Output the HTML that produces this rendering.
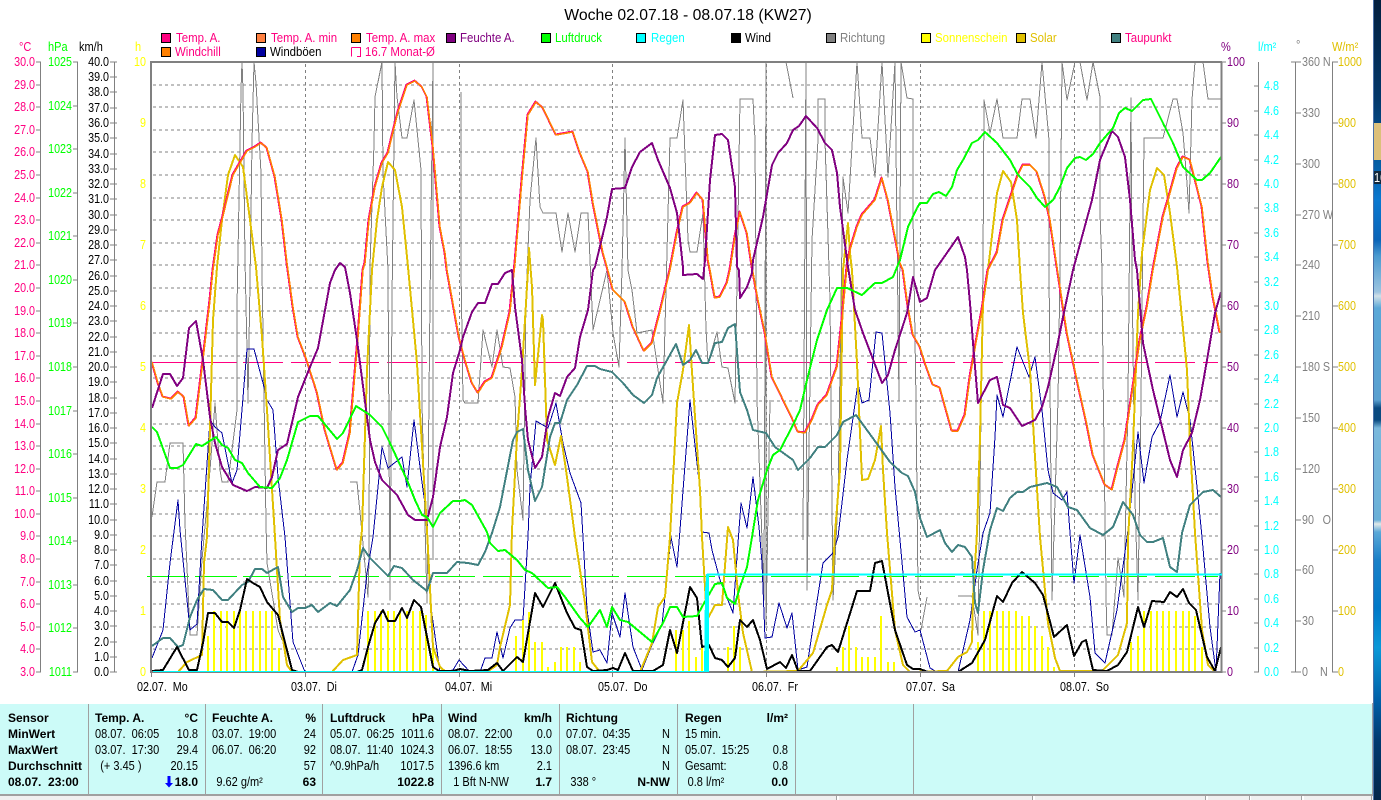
<!DOCTYPE html>
<html lang="de">
<head>
<meta charset="utf-8">
<title>Woche 02.07.18 - 08.07.18 (KW27)</title>
<style>
html,body{margin:0;padding:0;background:#fff;width:1381px;height:800px;overflow:hidden}
svg{display:block;font-family:"Liberation Sans",Arial,sans-serif;font-size:12.5px}
text{white-space:pre}
.c{shape-rendering:crispEdges;fill:none}
.b{font-weight:bold;font-size:12px}
.e{text-anchor:end}
.l{font-size:13px}
</style>
</head>
<body>
<svg width="1381" height="800" viewBox="0 0 1381 800" xmlns="http://www.w3.org/2000/svg">
<defs>
<linearGradient id="d" x1="0" y1="0" x2="0" y2="1">
<stop offset="0" stop-color="#021f3f"/><stop offset=".125" stop-color="#03386b"/><stop offset=".21" stop-color="#0560a8"/>
<stop offset=".25" stop-color="#0a78d0"/><stop offset=".30" stop-color="#0a64b8"/><stop offset=".32" stop-color="#4a9ad0"/>
<stop offset=".365" stop-color="#9cc4e0"/><stop offset=".37" stop-color="#d0e0e8"/><stop offset=".385" stop-color="#5aa8d8"/>
<stop offset=".50" stop-color="#5aa0d0"/><stop offset=".51" stop-color="#0a4a80"/><stop offset=".525" stop-color="#0a4a80"/>
<stop offset=".535" stop-color="#7ab8dc"/><stop offset=".65" stop-color="#6ab0d8"/><stop offset=".655" stop-color="#e0e8e8"/>
<stop offset=".665" stop-color="#5aa8d8"/><stop offset=".70" stop-color="#1a80c8"/><stop offset=".76" stop-color="#0078c8"/>
<stop offset=".81" stop-color="#0a98d8"/><stop offset=".875" stop-color="#0060a8"/><stop offset=".925" stop-color="#003a70"/>
<stop offset="1" stop-color="#02264a"/>
</linearGradient>
<clipPath id="p"><rect x="151" y="62" width="1071" height="612"/></clipPath>
<polyline id="ta" points="152,362 158,383 163,397 171,399 178,392 184,397 189,426 196,418 203,360 210,300 213,270 218,235 222,220 233,175 247,151 255,147 261,143 267,148 275,177 282,220 287,263 293,307 298,337 306,358 317,392 325,430 337,470 343,463 350,433 355,373 358,337 363,270 365,263 369,220 375,187 382,163 388,153 393,132 398,112 407,85 415,81 422,87 427,97 433,147 440,227 445,253 447,270 459,337 465,360 472,383 478,393 485,382 492,378 502,347 510,312 515,263 522,180 528,115 536,102 543,108 556,135 573,132 580,153 588,172 593,203 603,253 607,267 613,290 625,302 633,327 644,351 652,343 660,312 670,270 677,233 683,207 690,203 697,193 703,200 708,260 710,270 715,298 720,297 727,283 730,270 735,237 740,212 747,233 752,267 758,300 765,333 772,377 793,420 798,432 805,433 812,420 818,405 827,395 837,367 842,320 847,267 850,250 857,227 862,215 875,200 882,178 888,200 900,263 903,270 908,307 913,335 920,347 925,363 933,385 940,388 947,413 952,431 958,431 965,415 970,377 977,337 982,310 988,270 997,253 1003,220 1012,193 1018,175 1023,165 1030,165 1037,172 1045,197 1050,220 1057,267 1067,333 1077,380 1087,425 1093,455 1105,485 1112,490 1117,470 1125,440 1133,387 1140,340 1147,307 1153,270 1163,217 1170,193 1177,168 1183,157 1190,160 1197,187 1202,207 1208,263 1213,297 1220,333"/>
</defs>

<!-- desktop strip -->
<rect x="1373" y="0" width="8" height="800" fill="url(#d)"/>
<rect x="1373" y="0" width="1" height="800" fill="#4a70a8"/>
<rect x="1374" y="123" width="7" height="37" fill="#dcc07a"/>
<rect x="1374" y="171" width="7" height="13" fill="#12283c"/>
<text transform="translate(1374 182) scale(.88 1)" fill="#fff">10</text>

<!-- title -->
<text x="688" y="20" text-anchor="middle" font-size="15.75" fill="#000">Woche 02.07.18 - 08.07.18 (KW27)</text>

<!-- legend swatches -->
<g class="c" stroke="#000" stroke-width="1" shape-rendering="crispEdges">
<rect x="161.5" y="33.5" width="9" height="9" fill="#ff0080"/>
<rect x="161.5" y="47.5" width="9" height="9" fill="#ff8000"/>
<rect x="256.5" y="33.5" width="9" height="9" fill="#ff8040"/>
<rect x="256.5" y="47.5" width="9" height="9" fill="#0000a0"/>
<rect x="351.5" y="33.5" width="9" height="9" fill="#ff8000"/>
<rect x="446.5" y="33.5" width="9" height="9" fill="#800080"/>
<rect x="541.5" y="33.5" width="9" height="9" fill="#00ff00"/>
<rect x="636.5" y="33.5" width="9" height="9" fill="#00ffff"/>
<rect x="731.5" y="33.5" width="9" height="9" fill="#000"/>
<rect x="826.5" y="33.5" width="9" height="9" fill="#808080"/>
<rect x="921.5" y="33.5" width="9" height="9" fill="#ffff00"/>
<rect x="1016.5" y="33.5" width="9" height="9" fill="#e0c000"/>
<rect x="1111.5" y="33.5" width="9" height="9" fill="#408080"/>
</g>
<path class="c" stroke="#ff0080" d="M351.5 47.5H360.5V56.5H357M351.5 47.5V56.5"/>
<g class="l">
<text transform="translate(176 42) scale(.88 1)" fill="#ff0080">Temp. A.</text>
<text transform="translate(175 56) scale(.88 1)" fill="#ff0080">Windchill</text>
<text transform="translate(271 42) scale(.88 1)" fill="#ff0080">Temp. A. min</text>
<text transform="translate(270 56) scale(.88 1)" fill="#000">Windböen</text>
<text transform="translate(366 42) scale(.88 1)" fill="#ff0080">Temp. A. max</text>
<text transform="translate(365 56) scale(.88 1)" fill="#ff0080">16.7 Monat-Ø</text>
<text transform="translate(460 42) scale(.88 1)" fill="#800080">Feuchte A.</text>
<text transform="translate(555 42) scale(.88 1)" fill="#00ff00">Luftdruck</text>
<text transform="translate(651 42) scale(.88 1)" fill="#00ffff">Regen</text>
<text transform="translate(745 42) scale(.88 1)" fill="#000">Wind</text>
<text transform="translate(840 42) scale(.88 1)" fill="#808080">Richtung</text>
<text transform="translate(935 42) scale(.88 1)" fill="#ffff00">Sonnenschein</text>
<text transform="translate(1030 42) scale(.88 1)" fill="#e0c000">Solar</text>
<text transform="translate(1125 42) scale(.88 1)" fill="#ff0080">Taupunkt</text>
</g>

<!-- unit labels -->
<text transform="translate(19 51) scale(.88 1)" fill="#ff0080">°C</text>
<text transform="translate(48 51) scale(.88 1)" fill="#00ff00">hPa</text>
<text transform="translate(79 51) scale(.88 1)" fill="#000">km/h</text>
<text transform="translate(135 51) scale(.88 1)" fill="#ffff00">h</text>
<text transform="translate(1221 51) scale(.88 1)" fill="#800080">%</text>
<text transform="translate(1258 51) scale(.88 1)" fill="#00ffff">l/m²</text>
<text transform="translate(1296 49) scale(.88 1)" fill="#808080">°</text>
<text transform="translate(1332 51) scale(.88 1)" fill="#e0c000">W/m²</text>

<!-- left axes -->
<path class="c" stroke="#808080" d="M40.5 62V672M77.5 62V672M114.5 62V672
M36 62H41M36 85H41M36 107H41M36 130H41M36 152H41M36 175H41M36 198H41M36 220H41M36 243H41M36 265H41M36 288H41M36 311H41M36 333H41M36 356H41M36 378H41M36 401H41M36 424H41M36 446H41M36 469H41M36 491H41M36 514H41M36 536H41M36 559H41M36 582H41M36 604H41M36 627H41M36 649H41M36 672H41
M73 62H78M73 106H78M73 149H78M73 193H78M73 236H78M73 280H78M73 323H78M73 367H78M73 411H78M73 454H78M73 498H78M73 541H78M73 585H78M73 628H78M73 672H78
M110 62H117M110 77H117M110 92H117M110 108H117M110 123H117M110 138H117M110 154H117M110 169H117M110 184H117M110 199H117M110 215H117M110 230H117M110 245H117M110 260H117M110 276H117M110 291H117M110 306H117M110 321H117M110 337H117M110 352H117M110 367H117M110 382H117M110 398H117M110 413H117M110 428H117M110 443H117M110 459H117M110 474H117M110 489H117M110 504H117M110 520H117M110 535H117M110 550H117M110 565H117M110 581H117M110 596H117M110 611H117M110 626H117M110 642H117M110 657H117M110 672H117"/>

<g class="e" fill="#ff0080" transform="translate(35 0) scale(.86 1)">
<text y="66">30.0</text><text y="89">29.0</text><text y="111">28.0</text><text y="134">27.0</text><text y="156">26.0</text><text y="179">25.0</text><text y="202">24.0</text><text y="224">23.0</text><text y="247">22.0</text><text y="269">21.0</text><text y="292">20.0</text><text y="315">19.0</text><text y="337">18.0</text><text y="360">17.0</text><text y="382">16.0</text><text y="405">15.0</text><text y="428">14.0</text><text y="450">13.0</text><text y="473">12.0</text><text y="495">11.0</text><text y="518">10.0</text><text y="540">9.0</text><text y="563">8.0</text><text y="586">7.0</text><text y="608">6.0</text><text y="631">5.0</text><text y="653">4.0</text><text y="676">3.0</text>
</g>
<g class="e" fill="#00ff00" transform="translate(72 0) scale(.86 1)">
<text y="66">1025</text><text y="110">1024</text><text y="153">1023</text><text y="197">1022</text><text y="240">1021</text><text y="284">1020</text><text y="327">1019</text><text y="371">1018</text><text y="415">1017</text><text y="458">1016</text><text y="502">1015</text><text y="545">1014</text><text y="589">1013</text><text y="632">1012</text><text y="676">1011</text>
</g>
<g class="e" fill="#000" transform="translate(109 0) scale(.86 1)">
<text y="66">40.0</text><text y="81">39.0</text><text y="96">38.0</text><text y="112">37.0</text><text y="127">36.0</text><text y="142">35.0</text><text y="158">34.0</text><text y="173">33.0</text><text y="188">32.0</text><text y="203">31.0</text><text y="219">30.0</text><text y="234">29.0</text><text y="249">28.0</text><text y="264">27.0</text><text y="280">26.0</text><text y="295">25.0</text><text y="310">24.0</text><text y="325">23.0</text><text y="341">22.0</text><text y="356">21.0</text><text y="371">20.0</text><text y="386">19.0</text><text y="402">18.0</text><text y="417">17.0</text><text y="432">16.0</text><text y="447">15.0</text><text y="463">14.0</text><text y="478">13.0</text><text y="493">12.0</text><text y="508">11.0</text><text y="524">10.0</text><text y="539">9.0</text><text y="554">8.0</text><text y="569">7.0</text><text y="585">6.0</text><text y="600">5.0</text><text y="615">4.0</text><text y="630">3.0</text><text y="646">2.0</text><text y="661">1.0</text><text y="676">0.0</text>
</g>
<g class="e" fill="#ffff00" transform="translate(146 0) scale(.86 1)">
<text y="66">10</text><text y="127">9</text><text y="188">8</text><text y="249">7</text><text y="310">6</text><text y="371">5</text><text y="432">4</text><text y="493">3</text><text y="554">2</text><text y="615">1</text><text y="676">0</text>
</g>

<!-- grid -->
<path class="c" stroke="#808080" stroke-dasharray="3 3" d="M153 85H1221M153 107H1221M153 130H1221M153 152H1221M153 175H1221M153 198H1221M153 220H1221M153 243H1221M153 265H1221M153 288H1221M153 311H1221M153 333H1221M153 356H1221M153 378H1221M153 401H1221M153 424H1221M153 446H1221M153 469H1221M153 491H1221M153 514H1221M153 536H1221M153 559H1221M153 582H1221M153 604H1221M153 627H1221M153 649H1221
M305.5 64V672M459.5 64V672M612.5 64V672M766.5 64V672M920.5 64V672M1074.5 64V672"/>
<path class="c" stroke="#808080" d="M151.5 672V677M305.5 672V677M459.5 672V677M612.5 672V677M766.5 672V677M920.5 672V677M1074.5 672V677"/>

<!-- reference lines -->
<path class="c" stroke="#ff0080" d="M152 362.5H237M243 362.5H283M291 362.5H331M339 362.5H379M387 362.5H427M435 362.5H475M483 362.5H523M531 362.5H571M579 362.5H619M627 362.5H667M675 362.5H715M723 362.5H763M771 362.5H811M819 362.5H859M867 362.5H907M915 362.5H955M963 362.5H1003M1011 362.5H1051M1059 362.5H1099M1107 362.5H1147M1155 362.5H1195M1203 362.5H1218"/>
<path class="c" stroke="#00ff00" d="M147 576.5H189M195 576.5H237M243 576.5H283M291 576.5H331M339 576.5H379M387 576.5H427M435 576.5H475M483 576.5H523M531 576.5H571M579 576.5H619M627 576.5H667M675 576.5H715M723 576.5H763M771 576.5H811M819 576.5H859M867 576.5H907M915 576.5H955M963 576.5H1003M1011 576.5H1051M1059 576.5H1099M1107 576.5H1147M1155 576.5H1195M1203 576.5H1218"/>

<g clip-path="url(#p)" fill="none" stroke-linejoin="round" class="c">
<!-- Richtung -->
<path class="c" stroke="#808080" d="M152 517L157 482L165 482L170 443L183 443L185 523L190 635L197 635L202 560L210 470L215 403L220 470L222 482L228 482L237 410L237 307L238 253L241 90L242 62L243 90L245 260L247 350L248 403L250 282L252 143L254 62L256 83L261 173L262 270L266 523L267 563L278 630L282 640
M350 482L357 482L362 533L368 597L369 560L370 267L374 143L375 97L382 62L383 173L388 270L390 600L392 300L395 62L397 97L402 138L407 138L414 100L421 170L422 403L427 603L428 493L430 300L433 62L433 560
M461 92L461 270L463 400L465 403L478 403L483 330L492 367L497 330L503 367L510 368L515 397L517 470L523 520L526 300L530 200L536 138L540 207L543 213L556 213L562 252L568 213L575 252L581 213L588 213L593 330L607 270L613 333L619 367L622 270L625 138L628 270L632 290L637 333L652 330L663 403L670 138L677 138L683 100L688 240L690 252L697 252L703 213L706 330L708 363L717 332L722 367L728 368L735 403L740 99L753 99L755 140L757 400L762 540L764 600L766 62L766 625L770 400
M786 62L793 98
M803 540L806 62L807 590L812 240L818 140L818 99L825 99L825 140L830 300L833 600L838 500L843 177L848 213L857 62L862 138L870 138L875 177L882 62L888 177L895 62L899 400L901 62L907 98L913 99L913 213L916 400L918 590L920 600
M921 630L927 597
M958 596L972 596L978 635L983 267L984 100L990 133L997 99L1003 138L1017 138L1022 99L1030 99L1036 138L1042 62L1049 140L1049 270L1052 600L1058 400L1060 270L1062 62L1067 100L1075 62L1080 62L1087 100L1093 62L1100 97L1100 213L1102 270L1103 370L1105 520L1106 597L1107 635L1112 635L1118 558L1124 597L1128 400L1131 98L1132 270L1135 500L1138 600L1141 400L1144 138L1163 138L1173 99L1177 99L1183 133L1187 183L1189 213L1192 100L1195 62L1203 62L1208 99L1221 99"/>

<!-- Windböen -->
<polyline stroke="#0000a0" points="152,658 163,630 170,563 178,500 180,530 190,630 197,624 202,537 210,420 215,427 222,433 232,483 237,470 247,349 254,349 263,383 267,400 273,410 278,477 285,537 293,642 305,672 352,672 358,655 367,573 373,537 382,447 388,468 402,457 407,487 414,420 423,490 427,517 430,600 440,672 453,670 459,660 470,672 480,672 485,658 492,658 497,632 503,658 510,628 515,620 523,620 528,537 530,487 536,421 548,428 556,403 563,443 570,473 581,503 583,537 587,610 593,652 600,650 607,663 612,613 620,637 625,593 633,647 642,670 652,645 662,625 671,537 677,567 680,530 690,400 700,490 702,532 709,533 712,550 720,580 733,613 738,543 741,503 747,528 753,477 759,527 762,563 765,638 772,637 779,603 787,628 792,613 798,670 807,667 813,627 823,563 833,553 838,537 847,460 858,383 862,403 869,400 876,332 882,333 890,413 895,487 900,540 907,617 915,632 920,630 930,668 937,672 958,672 970,620 977,570 983,533 990,513 995,437 997,395 1003,417 1017,347 1029,377 1035,357 1042,410 1048,470 1053,493 1062,500 1067,492 1070,533 1074,583 1080,535 1090,597 1095,653 1105,663 1117,610 1128,530 1138,432 1144,483 1152,437 1160,422 1170,375 1177,417 1183,392 1190,420 1197,487 1202,537 1210,627 1216,672 1220,573"/>

<!-- Sonnenschein -->
<path stroke="#ffff00" stroke-width="2" class="c" d="M208 636V672M214 611V672M221 611V672M227 611V672M234 611V672M240 611V672M246 611V672M253 611V672M260 611V672M266 611V672M272 611V672M279 648V672
M368 611V672M375 611V672M381 611V672M388 611V672M394 611V672M400 611V672M407 611V672M413 611V672M420 611V672M426 615V672M433 647V672
M516 636V672M523 620V672M529 612V672M535 642V672M542 642V672M548 667V672M555 662V672M561 647V672M567 647V672M574 647V672M580 662V672
M676 630V672M683 630V672M689 621V672M696 657V672M702 646V672M728 647V672M734 626V672M740 647V672
M837 667V672M843 647V672M849 626V672M856 647V672M862 657V672M868 657V672M875 657V672M881 616V672M888 662V672M894 662V672
M978 642V672M984 611V672M990 611V672M997 611V672M1003 611V672M1009 611V672M1016 611V672M1022 616V672M1029 616V672M1035 626V672M1042 636V672M1048 647V672M1054 667V672
M1131 642V672M1138 636V672M1144 611V672M1151 611V672M1157 611V672M1163 611V672M1169 611V672M1176 611V672M1183 611V672M1189 611V672M1195 616V672M1202 647V672"/>

<!-- Solar -->
<polyline stroke="#e0c000" stroke-width="2" points="178,672 187,662 202,655 204,563 207,537 213,320 217,267 222,220 228,175 235,155 243,167 250,220 256,267 262,337 267,410 275,537 280,620 287,665 292,672 332,672 343,660 357,655 360,547 362,530 367,370 372,270 377,220 382,187 388,162 395,170 402,207 408,267 417,363 423,463 427,530 433,647 440,667 446,672 487,672 497,665 500,647 510,605 512,530 517,437 522,370 528,270 529,248 532,287 535,385 537,365 542,315 543,320 547,440 555,465 561,436 567,477 575,537 585,603 592,662 600,672 640,672 652,643 658,607 665,597 670,537 677,403 683,370 689,325 693,387 700,490 702,537 707,620 715,605 722,605 728,527 733,540 738,593 743,633 752,672 798,671 813,653 827,605 832,590 835,533 840,470 843,270 848,223 850,253 852,270 857,363 862,480 868,479 875,460 881,426 883,470 887,533 895,630 903,665 910,672 947,671 958,657 967,652 972,642 973,597 977,533 980,437 983,303 988,270 997,193 1003,171 1011,182 1017,220 1020,270 1023,313 1030,370 1035,457 1040,537 1048,623 1055,658 1060,671 1102,671 1118,655 1127,623 1128,540 1133,447 1138,313 1142,253 1150,190 1157,168 1164,175 1170,213 1177,267 1187,370 1190,443 1195,533 1202,630 1208,665 1215,672 1221,672"/>

<!-- Taupunkt -->
<polyline stroke="#408080" stroke-width="2" points="152,646 163,638 170,638 178,647 183,645 190,617 197,600 204,589 213,590 222,600 228,600 242,585 248,582 255,569 262,569 267,573 278,567 283,597 292,612 298,608 305,608 312,605 318,612 330,603 337,606 350,590 357,570 363,548 370,558 388,576 394,566 402,568 413,580 427,591 433,573 447,573 457,562 468,563 478,565 485,552 492,533 500,507 513,440 517,432 523,429 528,470 535,501 542,487 550,437 555,423 560,423 567,400 577,385 587,366 595,366 600,369 612,372 623,383 633,395 644,403 652,395 657,378 676,344 683,365 690,360 696,350 702,363 708,363 715,343 722,342 728,328 735,324 740,392 747,410 753,430 766,433 775,447 793,460 798,470 810,458 818,447 825,447 837,435 843,422 856,415 880,448 890,462 902,473 908,476 915,492 920,518 927,537 940,530 945,543 952,552 958,545 965,547 972,557 973,573 975,603 978,613 983,570 990,530 997,508 1003,511 1010,498 1017,492 1023,492 1030,487 1047,483 1057,487 1068,507 1077,510 1090,528 1103,535 1113,527 1123,502 1133,515 1140,535 1147,542 1153,542 1163,538 1170,567 1177,572 1182,533 1190,505 1203,492 1213,490 1221,497"/>

<!-- Temperatur -->
<use href="#ta" transform="translate(-.5 -.5)" stroke="#ff0080" stroke-width="2"/>
<use href="#ta" stroke="#ff8000" stroke-width="1.5"/>

<!-- Feuchte -->
<polyline stroke="#800080" stroke-width="2" points="152,408 163,374 170,374 177,386 183,378 189,328 196,321 203,360 210,417 215,443 222,467 233,485 247,491 255,487 267,488 272,477 278,450 287,444 298,397 310,367 318,348 330,283 335,270 340,263 345,267 350,293 357,340 370,440 375,462 382,480 397,495 408,515 415,520 427,520 433,497 440,447 447,417 453,373 460,350 463,337 472,312 478,303 485,303 492,284 498,284 505,273 512,270 515,307 522,360 525,407 528,440 535,468 542,457 548,417 555,393 560,396 567,377 575,368 580,337 588,310 593,270 595,267 607,217 612,189 625,188 632,167 640,152 652,143 658,160 670,188 677,213 683,267 683,275 697,274 703,279 705,260 710,180 715,135 722,134 728,140 735,187 737,267 739,270 740,298 747,287 752,273 753,260 763,217 772,165 778,153 787,143 793,130 799,126 806,116 817,128 825,143 832,150 837,173 840,207 848,267 855,310 863,333 882,383 888,375 895,350 907,313 913,277 920,302 927,298 935,270 958,237 965,257 967,270 970,303 973,343 978,403 990,380 997,377 1003,405 1010,408 1022,426 1035,420 1042,407 1048,387 1057,347 1063,317 1073,270 1083,233 1092,200 1100,160 1112,131 1118,137 1125,157 1130,200 1135,260 1137,270 1143,343 1153,390 1170,460 1177,477 1183,450 1192,433 1200,400 1207,360 1215,313 1221,292"/>

<!-- Wind -->
<polyline stroke="#000" stroke-width="2" points="152,671 163,670 177,647 189,670 197,670 203,643 208,613 215,613 222,622 228,622 234,628 240,610 247,579 253,583 260,587 267,602 278,615 292,670 298,672 357,672 362,670 368,647 375,623 383,610 388,621 395,621 402,608 407,618 414,600 421,607 433,667 439,671 453,671 460,669 470,671 488,670 497,663 503,671 517,657 523,662 535,593 543,607 555,583 567,613 575,628 581,630 587,667 593,671 607,670 613,668 618,670 625,653 633,671 653,671 663,665 670,630 677,653 690,587 697,598 702,647 709,645 715,658 722,660 728,667 735,658 740,620 747,627 753,620 760,640 767,669 780,662 786,668 792,655 798,671 810,671 827,647 832,645 838,652 857,591 870,591 875,563 882,561 895,630 907,665 913,669 920,669 928,672 958,672 972,663 985,640 997,596 1003,602 1012,583 1022,572 1035,583 1043,595 1054,637 1067,625 1074,656 1082,642 1086,640 1093,670 1107,671 1118,665 1127,652 1138,607 1144,627 1152,601 1164,602 1170,592 1177,597 1183,589 1189,603 1196,610 1207,657 1215,671 1221,647"/>

<!-- Luftdruck -->
<polyline stroke="#00ff00" stroke-width="2" points="152,427 157,432 170,468 177,468 183,465 196,444 202,446 216,437 222,445 228,448 235,460 242,463 248,473 260,487 272,488 280,478 287,460 298,422 310,416 318,416 337,439 343,433 356,406 370,415 382,427 390,443 407,480 415,500 422,515 427,517 433,527 440,513 453,501 460,501 465,500 472,505 487,532 490,543 498,551 505,550 517,560 525,570 532,573 548,588 557,587 565,597 580,618 588,627 600,610 607,627 612,607 620,620 628,622 652,642 663,623 670,607 677,607 683,617 697,616 703,605 715,584 722,583 727,598 735,604 740,587 747,567 752,537 758,500 767,470 773,455 780,450 793,425 800,410 807,380 817,340 827,310 837,288 847,288 862,295 875,283 882,283 893,277 900,260 908,227 917,208 920,203 927,203 933,194 939,192 946,196 952,187 957,170 963,160 972,143 978,140 985,132 997,143 1010,160 1018,175 1030,187 1037,198 1045,207 1053,200 1060,187 1067,168 1075,158 1080,157 1086,160 1093,154 1100,143 1113,128 1119,113 1125,108 1132,111 1143,100 1151,99 1163,123 1173,143 1183,167 1197,180 1202,180 1210,173 1221,157"/>
</g>

<!-- plot border -->
<path class="c" stroke="#808080" stroke-width="2" d="M150 62H1222M151 62V673M1221.5 62V673M151 672H1222"/>

<!-- Regen -->
<path class="c" stroke="#00ffff" stroke-width="1" d="M153 671.5H704"/>
<path class="c" stroke="#00ffff" stroke-width="2" d="M705 672L706 590L707.5 574"/>
<path class="c" stroke="#00ffff" stroke-width="3" d="M707.5 574V672"/>
<path class="c" stroke="#00ffff" stroke-width="2" d="M707 574.5H1222"/>

<!-- right axes -->
<path class="c" stroke="#808080" d="M1258.5 62V672M1295.5 62V672M1332.5 62V672
M1222 62H1226M1222 123H1226M1222 184H1226M1222 245H1226M1222 306H1226M1222 367H1226M1222 428H1226M1222 489H1226M1222 550H1226M1222 611H1226M1222 672H1226
M1254 86H1259M1254 111H1259M1254 135H1259M1254 160H1259M1254 184H1259M1254 208H1259M1254 233H1259M1254 257H1259M1254 282H1259M1254 306H1259M1254 330H1259M1254 355H1259M1254 379H1259M1254 404H1259M1254 428H1259M1254 452H1259M1254 477H1259M1254 501H1259M1254 526H1259M1254 550H1259M1254 574H1259M1254 599H1259M1254 623H1259M1254 648H1259M1254 672H1259
M1291 62H1301M1295 113H1301M1295 164H1301M1295 215H1301M1295 265H1301M1295 316H1301M1295 367H1301M1295 418H1301M1295 469H1301M1295 520H1301M1295 570H1301M1295 621H1301M1291 672H1301
M1332 62H1338M1332 123H1338M1332 184H1338M1332 245H1338M1332 306H1338M1332 367H1338M1332 428H1338M1332 489H1338M1332 550H1338M1332 611H1338M1332 672H1338"/>

<g fill="#800080" transform="translate(1227 0) scale(.86 1)">
<text y="66">100</text><text y="127">90</text><text y="188">80</text><text y="249">70</text><text y="310">60</text><text y="371">50</text><text y="432">40</text><text y="493">30</text><text y="554">20</text><text y="615">10</text><text y="676">0</text>
</g>
<g fill="#00ffff" transform="translate(1264 0) scale(.86 1)">
<text y="90">4.8</text><text y="115">4.6</text><text y="139">4.4</text><text y="164">4.2</text><text y="188">4.0</text><text y="212">3.8</text><text y="237">3.6</text><text y="261">3.4</text><text y="286">3.2</text><text y="310">3.0</text><text y="334">2.8</text><text y="359">2.6</text><text y="383">2.4</text><text y="408">2.2</text><text y="432">2.0</text><text y="456">1.8</text><text y="481">1.6</text><text y="505">1.4</text><text y="530">1.2</text><text y="554">1.0</text><text y="578">0.8</text><text y="603">0.6</text><text y="627">0.4</text><text y="652">0.2</text><text y="676">0.0</text>
</g>
<g fill="#808080" transform="translate(1302 0) scale(.86 1)">
<text y="66">360 N</text><text y="117">330</text><text y="168">300</text><text y="219">270 W</text><text y="269">240</text><text y="320">210</text><text y="371">180 S</text><text y="422">150</text><text y="473">120</text><text y="524">90</text><text x="24" y="524">O</text><text y="574">60</text><text y="625">30</text><text y="676">0</text><text x="21" y="676">N</text>
</g>
<g fill="#e0c000" transform="translate(1338 0) scale(.86 1)">
<text y="66">1000</text><text y="127">900</text><text y="188">800</text><text y="249">700</text><text y="310">600</text><text y="371">500</text><text y="432">400</text><text y="493">300</text><text y="554">200</text><text y="615">100</text><text y="676">0</text>
</g>

<!-- date labels -->
<g fill="#000">
<text transform="translate(137 691) scale(.86 1)">02.07.  Mo</text><text transform="translate(291 691) scale(.86 1)">03.07.  Di</text><text transform="translate(445 691) scale(.86 1)">04.07.  Mi</text><text transform="translate(598 691) scale(.86 1)">05.07.  Do</text><text transform="translate(752 691) scale(.86 1)">06.07.  Fr</text><text transform="translate(906 691) scale(.86 1)">07.07.  Sa</text><text transform="translate(1060 691) scale(.86 1)">08.07.  So</text>
</g>

<!-- info panel -->
<rect x="0" y="704" width="1372" height="90" fill="#ccfbf8"/>
<path class="c" stroke="#a0a0a0" stroke-width="1" d="M88.5 704V794M205.5 704V794M322.5 704V794M441.5 704V794M559.5 704V794M677.5 704V794M795.5 704V794M913.5 704V794"/>
<rect x="1372" y="703" width="1" height="92" fill="#a0a0a0"/>
<rect x="0" y="794" width="1373" height="2" fill="#a0a0a0"/>
<rect x="0" y="796" width="1373" height="4" fill="#f0f0f0"/>
<path class="c" stroke="#fff" stroke-width="2" d="M838 796V800M1034 796V800M1207 796V800M1250 796V800M1303 796V800"/>
<path class="c" stroke="#a0a0a0" d="M836.5 796V800M1032.5 796V800M1205.5 796V800M1249.5 796V800M1301.5 796V800M1371.5 796V800"/>

<g fill="#000">
<text class="b" x="8" y="722">Sensor</text>
<text class="b" x="8" y="738">MinWert</text>
<text class="b" x="8" y="754">MaxWert</text>
<text class="b" x="8" y="770">Durchschnitt</text>
<text class="b" x="8" y="786">08.07.  23:00</text>

<text class="b" x="95" y="722">Temp. A.</text><text class="b e" x="198" y="722">°C</text>
<g transform="translate(95 0) scale(.88 1)"><text y="738">08.07.  06:05</text><text y="754">03.07.  17:30</text><text x="6" y="770">(+ 3.45 )</text></g>
<g class="e" transform="translate(198 0) scale(.88 1)"><text y="738">10.8</text><text y="754">29.4</text><text y="770">20.15</text></g>
<text class="b e" x="198" y="786">18.0</text>

<text class="b" x="212" y="722">Feuchte A.</text><text class="b e" x="316" y="722">%</text>
<g transform="translate(212 0) scale(.88 1)"><text y="738">03.07.  19:00</text><text y="754">06.07.  06:20</text><text x="5" y="786">9.62 g/m²</text></g>
<g class="e" transform="translate(316 0) scale(.88 1)"><text y="738">24</text><text y="754">92</text><text y="770">57</text></g>
<text class="b e" x="316" y="786">63</text>

<text class="b" x="330" y="722">Luftdruck</text><text class="b e" x="434" y="722">hPa</text>
<g transform="translate(330 0) scale(.88 1)"><text y="738">05.07.  06:25</text><text y="754">08.07.  11:40</text><text y="770">^0.9hPa/h</text></g>
<g class="e" transform="translate(434 0) scale(.88 1)"><text y="738">1011.6</text><text y="754">1024.3</text><text y="770">1017.5</text></g>
<text class="b e" x="434" y="786">1022.8</text>

<text class="b" x="448" y="722">Wind</text><text class="b e" x="552" y="722">km/h</text>
<g transform="translate(448 0) scale(.88 1)"><text y="738">08.07.  22:00</text><text y="754">06.07.  18:55</text><text y="770">1396.6 km</text><text x="6" y="786">1 Bft N-NW</text></g>
<g class="e" transform="translate(552 0) scale(.88 1)"><text y="738">0.0</text><text y="754">13.0</text><text y="770">2.1</text></g>
<text class="b e" x="552" y="786">1.7</text>

<text class="b" x="566" y="722">Richtung</text>
<g transform="translate(566 0) scale(.88 1)"><text y="738">07.07.  04:35</text><text y="754">08.07.  23:45</text><text x="5" y="786">338 °</text></g>
<g class="e" transform="translate(670 0) scale(.88 1)"><text y="738">N</text><text y="754">N</text><text y="770">N</text></g>
<text class="b e" x="670" y="786">N-NW</text>

<text class="b" x="685" y="722">Regen</text><text class="b e" x="788" y="722">l/m²</text>
<g transform="translate(685 0) scale(.88 1)"><text y="738">15 min.</text><text y="754">05.07.  15:25</text><text y="770">Gesamt:</text><text x="3" y="786">0.8 l/m²</text></g>
<g class="e" transform="translate(788 0) scale(.88 1)"><text y="754">0.8</text><text y="770">0.8</text></g>
<text class="b e" x="788" y="786">0.0</text>
</g>
<path d="M167.5 776H170.5V783H173L169 787.5L165 783H167.5Z" fill="#0000ff"/>
</svg>
</body>
</html>
